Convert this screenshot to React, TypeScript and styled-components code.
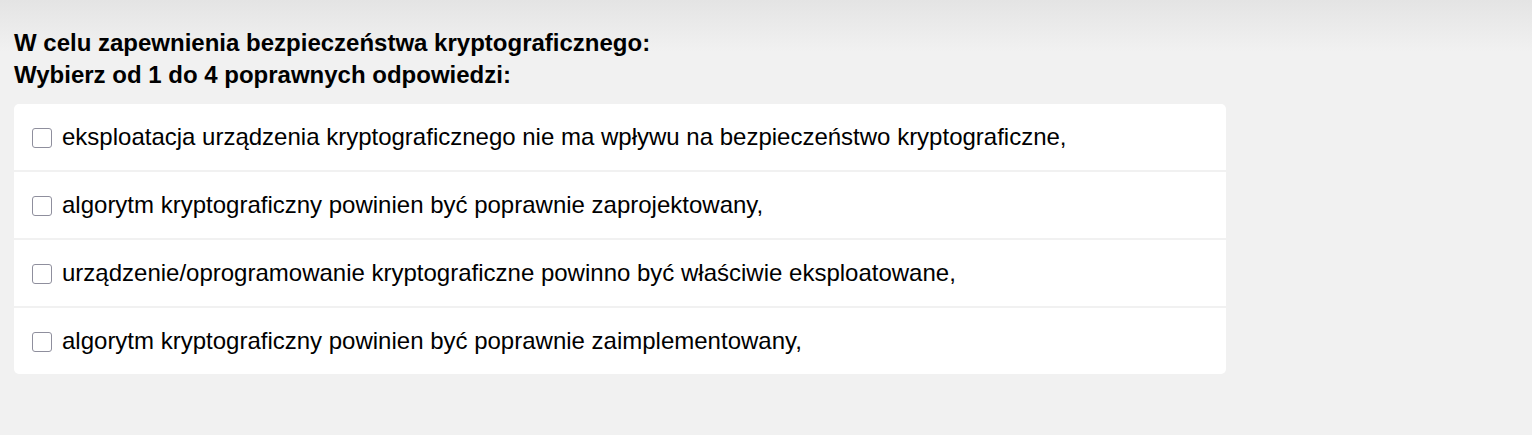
import { FC } from "react";
import styled, { createGlobalStyle } from "styled-components";

const GlobalStyle = createGlobalStyle`
  html, body {
    margin: 0;
    padding: 0;
  }
  body {
    background: #f1f1f1;
    font-family: "Liberation Sans", Arial, sans-serif;
    color: #000;
  }
`;

const Page = styled.div`
  min-height: 435px;
  background: linear-gradient(to bottom, #e4e4e4 0px, #f1f1f1 52px, #f1f1f1 100%);
  padding: 27px 14px 0 14px;
  box-sizing: border-box;
`;

const Question = styled.div`
  font-size: 24px;
  font-weight: bold;
  line-height: 32px;
  margin-bottom: 13px;
`;

const AnswerList = styled.div`
  width: 1212px;
  background: #f1f1f1;
  border-radius: 5px;
  overflow: hidden;
  display: flex;
  flex-direction: column;
  gap: 2px;
`;

const AnswerRow = styled.label`
  display: flex;
  align-items: center;
  gap: 10px;
  height: 66px;
  padding: 0 18px;
  background: #fff;
  font-size: 24px;
  cursor: pointer;
`;

const Box = styled.input`
  appearance: none;
  margin: 0;
  width: 20px;
  height: 20px;
  flex: none;
  border: 1px solid #8f8f9d;
  border-radius: 3px;
  background: #fff;
  box-sizing: border-box;
  position: relative;
  top: 1px;
  &:checked {
    background: #0075ff;
    border-color: #0075ff;
  }
`;

const answers = [
  "eksploatacja urządzenia kryptograficznego nie ma wpływu na bezpieczeństwo kryptograficzne,",
  "algorytm kryptograficzny powinien być poprawnie zaprojektowany,",
  "urządzenie/oprogramowanie kryptograficzne powinno być właściwie eksploatowane,",
  "algorytm kryptograficzny powinien być poprawnie zaimplementowany,",
];

const App: FC = () => {
  return (
    <>
      <GlobalStyle />
      <Page>
        <Question>
          W celu zapewnienia bezpieczeństwa kryptograficznego:
          <br />
          Wybierz od 1 do 4 poprawnych odpowiedzi:
        </Question>
        <AnswerList>
          {answers.map((a, i) => (
            <AnswerRow key={i}>
              <Box type="checkbox" />
              <span>{a}</span>
            </AnswerRow>
          ))}
        </AnswerList>
      </Page>
    </>
  );
};

export default App;
